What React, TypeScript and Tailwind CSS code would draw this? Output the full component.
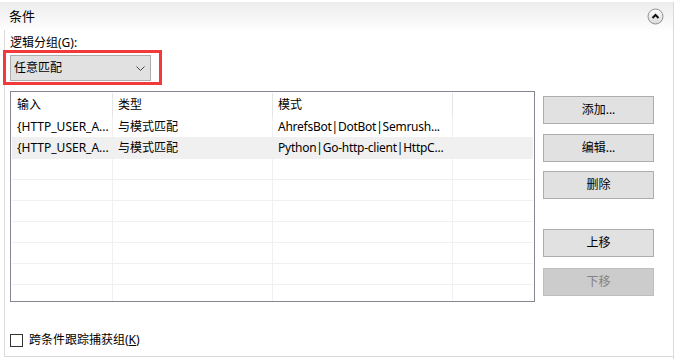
import React from 'react'

const rows = [
  { input: '{HTTP_USER_A...', type: '与模式匹配', pattern: 'AhrefsBot|DotBot|Semrush...' },
  { input: '{HTTP_USER_A...', type: '与模式匹配', pattern: 'Python|Go-http-client|HttpC...', selected: true },
  {}, {}, {}, {}, {}, {}, {},
] as { input?: string; type?: string; pattern?: string; selected?: boolean }[]

function CollapseIcon() {
  return (
    <svg width="17" height="17" viewBox="0 0 17 17">
      <defs>
        <linearGradient id="cg" x1="0" y1="0" x2="0" y2="1">
          <stop offset="0" stopColor="#ffffff" />
          <stop offset="1" stopColor="#d9d9d9" />
        </linearGradient>
      </defs>
      <circle cx="8.5" cy="8.5" r="7.5" fill="url(#cg)" stroke="#8f8f8f" />
      <path d="M5.5 10 L8.5 7 L11.5 10" stroke="#111" strokeWidth="2" fill="none" />
    </svg>
  )
}

function Btn({ label, disabled, className }: { label: string; disabled?: boolean; className?: string }) {
  return (
    <div
      className={
        'h-[28px] w-[111px] flex items-center justify-center border text-[12px] ' +
        (disabled ? 'bg-[#cccccc] border-[#bfbfbf] text-[#838383] ' : 'bg-[#e1e1e1] border-[#adadad] text-black ') +
        (className || '')
      }
    >
      {label}
    </div>
  )
}

export default function App() {
  return (
    <div
      className="w-[679px] h-[361px] bg-white text-black text-[12px] overflow-hidden"
      style={{ fontFamily: '"Noto Sans", "Noto Sans CJK SC", sans-serif' }}
    >
      <div className="w-[674px] h-[357px] border-r border-[#dadada]">
        <div className="mt-[2px] h-[28px] flex items-center justify-between pl-[9px] pr-[9px] bg-linear-to-b from-[#ededed] to-[#fdfdfd]">
          <span className="text-[13px] leading-[16px]">条件</span>
          <CollapseIcon />
        </div>

        <div className="ml-[4px] h-[327px] border-l border-b border-[#dadada] pt-[6px]">
          <div className="pl-[5px] leading-[14px]">逻辑分组(G):</div>

          <div className="-ml-[2px] w-[159px] h-[35px] border-[3px] border-[#f23a3d] pl-[4px] pt-[2px]">
            <div className="w-[141px] h-[26px] bg-[#e1e1e1] border border-[#adadad] flex items-center justify-between pl-[3px] pr-[5px]">
              <span>任意匹配</span>
              <svg width="9" height="5" viewBox="0 0 9 5">
                <path d="M0.5 0.5 L4.5 4.5 L8.5 0.5" stroke="#444" fill="none" />
              </svg>
            </div>
          </div>

          <div className="flex pl-[5px] mt-[6px] gap-[8px]">
            <div className="w-[525px] h-[211px] border border-[#828790] bg-white p-px overflow-hidden">
              <div className="flex h-[24px] items-center">
                <div className="w-[101px] h-full border-r border-[#e5e5e5] pl-[5px] flex items-center">输入</div>
                <div className="w-[160px] h-full border-r border-[#e5e5e5] pl-[5px] flex items-center">类型</div>
                <div className="w-[180px] h-full border-r border-[#e5e5e5] pl-[5px] flex items-center">模式</div>
                <div className="flex-1" />
              </div>
              {rows.map((r, i) => (
                <div
                  key={i}
                  className={'flex h-[21px] border-b border-[#f0f0f0] ' + (r.selected ? 'bg-[#f0f0f0]' : '')}
                >
                  <div className="w-[101px] h-full border-r border-[#f0f0f0] pl-[5px] flex items-center whitespace-nowrap">{r.input}</div>
                  <div className="w-[160px] h-full border-r border-[#f0f0f0] pl-[5px] flex items-center whitespace-nowrap">{r.type}</div>
                  <div className="w-[180px] h-full border-r border-[#f0f0f0] pl-[5px] flex items-center whitespace-nowrap tracking-[-0.25px]">{r.pattern}</div>
                  <div className="flex-1" />
                </div>
              ))}
            </div>

            <div className="flex flex-col pt-[5px]">
              <Btn label="添加..." />
              <Btn label="编辑..." className="mt-[10px]" />
              <Btn label="删除" className="mt-[9px]" />
              <Btn label="上移" className="mt-[30px]" />
              <Btn label="下移" disabled className="mt-[11px]" />
            </div>
          </div>

          <div className="flex items-center h-[16px] mt-[30px] pl-[5px]">
            <div className="w-[13px] h-[13px] border border-[#333] bg-white" />
            <span className="ml-[6px] leading-[16px]">
              跨条件跟踪捕获组(<span className="underline">K</span>)
            </span>
          </div>
        </div>
      </div>
    </div>
  )
}
